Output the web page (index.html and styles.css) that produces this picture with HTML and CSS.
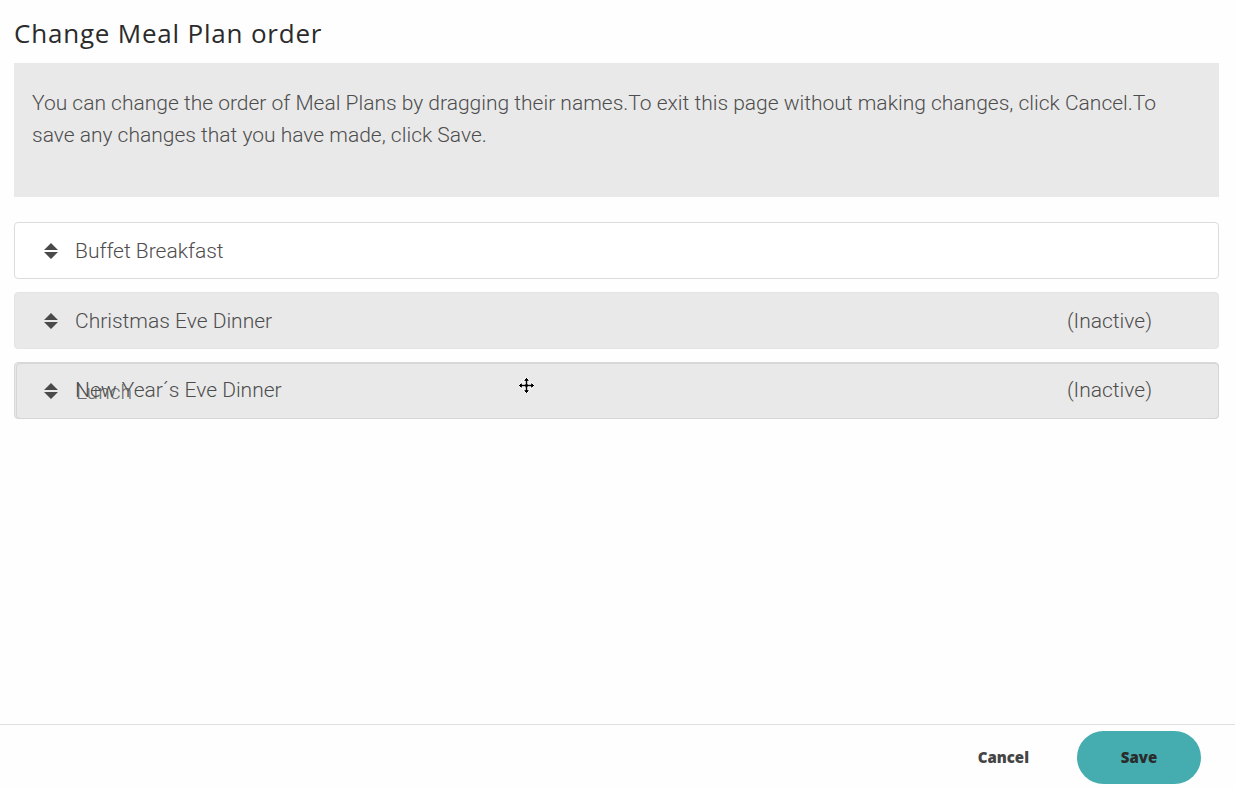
FILE: index.html
```html
<!DOCTYPE html>
<html lang="en">
<head>
<meta charset="utf-8">
<title>Change Meal Plan order</title>
<link rel="stylesheet" href="styles.css">
</head>
<body>
<div class="page">
  <main class="main">
    <h1 class="title">Change Meal Plan order</h1>
    <div class="info">
      <p>You can change the order of Meal Plans by dragging their names.To exit this page without making changes, click Cancel.To save any changes that you have made, click Save.</p>
    </div>
    <ul class="list">
      <li class="row">
        <svg class="sort" viewBox="0 0 14 16" width="14" height="16"><path d="M7 0 L14 7 L0 7 Z M0 9 L14 9 L7 16 Z" fill="#4a4a4a"/></svg>
        <span class="name">Buffet Breakfast</span>
      </li>
      <li class="row inactive">
        <svg class="sort" viewBox="0 0 14 16" width="14" height="16"><path d="M7 0 L14 7 L0 7 Z M0 9 L14 9 L7 16 Z" fill="#4a4a4a"/></svg>
        <span class="name">Christmas Eve Dinner</span>
        <span class="status">(Inactive)</span>
      </li>
      <li class="row inactive dragging">
        <svg class="sort" viewBox="0 0 14 16" width="14" height="16"><path d="M7 0 L14 7 L0 7 Z M0 9 L14 9 L7 16 Z" fill="#4a4a4a"/></svg>
        <span class="name">New Year´s Eve Dinner</span>
        <span class="status">(Inactive)</span>
        <div class="ghost"><span class="ghost-name">Lunch</span></div>
        <svg class="cursor" viewBox="0 0 17 17" width="17" height="17"><path d="M8.5 0.5 L12 4 L9.8 4 L9.8 7.2 L13 7.2 L13 5 L16.5 8.5 L13 12 L13 9.8 L9.8 9.8 L9.8 13 L12 13 L8.5 16.5 L5 13 L7.2 13 L7.2 9.8 L4 9.8 L4 12 L0.5 8.5 L4 5 L4 7.2 L7.2 7.2 L7.2 4 L5 4 Z" fill="#000" stroke="#fff" stroke-width="1"/></svg>
      </li>
    </ul>
  </main>
  <footer class="footer">
    <button class="btn-cancel" type="button">Cancel</button>
    <button class="btn-save" type="button">Save</button>
  </footer>
</div>
</body>
</html>
```
FILE: styles.css
```css
html, body {
  margin: 0;
  padding: 0;
  background: #fefefe;
}
.page {
  height: 100vh;
  display: flex;
  flex-direction: column;
  font-family: Roboto, "Liberation Sans", sans-serif;
}
.main {
  flex: 1;
  padding: 0 16px 0 14px;
}
.title {
  margin: 0;
  padding: 17px 0 14px;
  font-family: "Open Sans", "DejaVu Sans", sans-serif;
  font-weight: 500;
  font-size: 26px;
  line-height: 32px;
  color: #2b2b2b;
  letter-spacing: 0.8px;
}
.info {
  background: #e9e9e9;
  padding: 24px 18px 46px;
}
.info p {
  margin: 0;
  font-weight: 300;
  font-size: 21px;
  line-height: 32px;
  color: #4d4d4d;
}
.list {
  list-style: none;
  margin: 25px 0 0;
  padding: 0;
  display: flex;
  flex-direction: column;
  gap: 13px;
}
.row {
  position: relative;
  display: flex;
  align-items: center;
  height: 55px;
  border: 1px solid #dcdcdc;
  border-radius: 4px;
  background: #fff;
  padding: 0 66px 0 29px;
}
.row.inactive {
  background: #e9e9e9;
  border-color: #e4e4e4;
}
.row.dragging {
  border-color: #d8d8d8;
}
.sort {
  flex: none;
  margin-right: 17px;
}
.name {
  flex: 1;
  font-weight: 300;
  font-size: 21px;
  color: #4d4d4d;
}
.row.dragging .name,
.row.dragging .status {
  margin-top: -2px;
}
.status {
  font-weight: 300;
  font-size: 21px;
  color: #4d4d4d;
}
.ghost {
  position: absolute;
  left: 1px;
  top: 0;
  right: -1px;
  bottom: -1px;
  border: 1px solid #d6d6d6;
  border-radius: 4px;
  display: flex;
  align-items: center;
  padding: 2px 0 0 59px;
  pointer-events: none;
}
.ghost-name {
  font-weight: 300;
  font-size: 21px;
  color: #555;
  opacity: 0.85;
}
.cursor {
  position: absolute;
  left: 503px;
  top: 14px;
}
.footer {
  flex: none;
  height: 64px;
  border-top: 1px solid #dedede;
  display: flex;
  align-items: center;
  justify-content: flex-end;
  padding: 0 34px 0 0;
  gap: 48px;
}
.btn-cancel {
  border: none;
  background: none;
  font-family: "Open Sans", "DejaVu Sans", sans-serif;
  font-weight: 800;
  font-size: 15px;
  color: #444;
  padding: 0;
}
.btn-save {
  width: 124px;
  height: 53px;
  border: none;
  border-radius: 27px;
  background: #45adb0;
  font-family: "Open Sans", "DejaVu Sans", sans-serif;
  font-weight: 800;
  font-size: 15px;
  color: #2b2b2b;
}
```
